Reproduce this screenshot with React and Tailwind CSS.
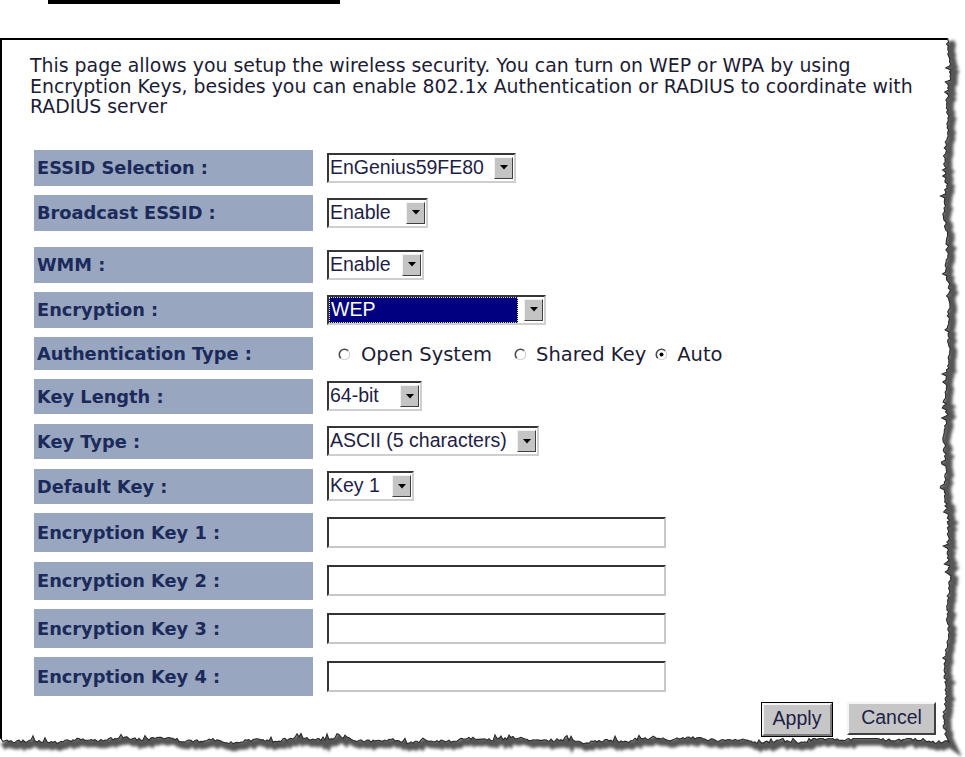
import React from 'react';

// seeded random so the torn edge looks the same every render
const makeRng = (seed) => () => {
  seed |= 0;
  seed = (seed + 0x6d2b79f5) | 0;
  let t = Math.imul(seed ^ (seed >>> 15), 1 | seed);
  t = (t + Math.imul(t ^ (t >>> 7), 61 | t)) ^ t;
  return ((t ^ (t >>> 14)) >>> 0) / 4294967296;
};

const edgePoints = () => {
  const r = makeRng(11);
  const pts = [];
  for (let y = 38; y <= 736; y += 2) {
    const x = 947 + 2 * Math.sin(y / 41) + 1.1 * Math.sin(y / 9) + (r() - 0.5) * 2.8 - (r() < 0.07 ? 3.5 : 0);
    pts.push([x, y]);
  }
  for (let x = 949; x >= 0; x -= 2) {
    let y = 740 + 1.6 * Math.sin(x / 29) + Math.sin(x / 7) + (r() - 0.5) * 2.8 - (r() < 0.07 ? 3.5 : 0);
    if (x > 752 && x < 945) y = Math.max(y, 738.5);
    pts.push([x, y]);
  }
  return pts;
};

const TornEdge = () => {
  const pts = edgePoints();
  const line = 'M' + pts.map(([x, y]) => `${x.toFixed(1)} ${y.toFixed(1)}`).join(' L');
  const last = pts[pts.length - 1];
  const outside = `${line} L0 ${last[1].toFixed(1)} L0 757 L965 757 L965 38 Z`;
  return (
    <svg className="pointer-events-none absolute left-0 top-0" width="965" height="757" viewBox="0 0 965 757">
      <defs>
        <clipPath id="outside">
          <path d={outside} />
        </clipPath>
        <filter id="blur" x="-5%" y="-5%" width="110%" height="110%">
          <feGaussianBlur stdDeviation="1.8" />
        </filter>
      </defs>
      <path d={outside} fill="#ffffff" />
      <g clipPath="url(#outside)">
        <path d={line} transform="translate(3 3)" fill="none" stroke="#555555" strokeWidth="8" filter="url(#blur)" />
      </g>
      <path d={line} fill="none" stroke="#2a2a2a" strokeWidth="1.1" />
    </svg>
  );
};

const Arrow = () => (
  <div className="flex h-[22px] w-[19px] items-center justify-center border border-t-[#f2f2f2] border-l-[#f2f2f2] border-r-[#404040] border-b-[#404040] bg-[#c4c4c4]">
    <svg width="8" height="5" viewBox="0 0 8 5">
      <path d="M0 0 L8 0 L4 4.5 Z" fill="#000" />
    </svg>
  </div>
);

const Select = ({ w, value, selected }) => (
  <div className={`flex h-[30px] items-center border-2 border-t-[#363636] border-l-[#363636] border-r-[#cfcfcf] border-b-[#cfcfcf] bg-white pr-[1px] ${w}`}>
    {selected ? (
      <div className="mr-[6px] flex h-full flex-1 items-center border border-dotted border-[#e8e0a0] bg-[#000080] pl-[1px] text-[19.5px] leading-none text-white">
        {value}
      </div>
    ) : (
      <div className="flex-1 pl-[1px] text-[19.5px] leading-none text-[#1e1e46]">{value}</div>
    )}
    <Arrow />
  </div>
);

const TextBox = () => (
  <div className="h-[31px] w-[339px] border-2 border-t-[#343434] border-l-[#343434] border-r-[#c8c8c8] border-b-[#c8c8c8] bg-white" />
);

const Radio = ({ checked }) => (
  <svg width="13" height="13" viewBox="0 0 13 13" className="shrink-0">
    <circle cx="6.5" cy="6.5" r="5.2" fill="#fff" />
    <path d="M10.2 2.8 A5.2 5.2 0 0 0 2.8 10.2" fill="none" stroke="#4a4a4a" strokeWidth="1.6" />
    <path d="M2.8 10.2 A5.2 5.2 0 0 0 10.2 2.8" fill="none" stroke="#d0d0d0" strokeWidth="1.1" />
    {checked && <circle cx="6.5" cy="6.5" r="2" fill="#000" />}
  </svg>
);

const Row = ({ label, className, children }) => (
  <div className={`flex items-center ${className}`}>
    <div className="flex h-full w-[279px] items-center bg-[#98a6bf] pl-[3px] pt-[2px] font-['DejaVu_Sans',Verdana,sans-serif] text-[17.8px] font-bold text-[#1b2a5a]">
      {label}
    </div>
    <div className="ml-[14px] flex items-center">{children}</div>
  </div>
);

export default function App() {
  return (
    <div className="relative h-[757px] w-[965px] overflow-hidden bg-white font-['DejaVu_Sans',Verdana,sans-serif]">
      <div className="ml-[48px] h-[4px] w-[292px] bg-black" />

      <div className="mt-[34px] h-[712px] w-[952px] border-l-2 border-t-2 border-black pl-[28px] pt-[15px]">
        <p className="text-[18.9px] leading-[20.5px] text-[#1c1c34]">
          This page allows you setup the wireless security. You can turn on WEP or WPA by using
          <br />
          Encryption Keys, besides you can enable 802.1x Authentication or RADIUS to coordinate with
          <br />
          RADIUS server
        </p>

        <div className="ml-[4px] mt-[33px] flex flex-col font-['Liberation_Sans',Arial,sans-serif]">
          <Row label="ESSID Selection :" className="h-[36px]">
            <Select w="w-[189px]" value="EnGenius59FE80" />
          </Row>
          <Row label="Broadcast ESSID :" className="mt-[9px] h-[36px]">
            <Select w="w-[101px]" value="Enable" />
          </Row>
          <Row label="WMM :" className="mt-[16px] h-[36px]">
            <Select w="w-[97px]" value="Enable" />
          </Row>
          <Row label="Encryption :" className="mt-[9px] h-[36px]">
            <Select w="w-[219px]" value="WEP" selected />
          </Row>
          <Row label="Authentication Type :" className="mt-[9px] h-[33px]">
            <div className="ml-[11px] mt-[3px] flex items-center font-['DejaVu_Sans',Verdana,sans-serif] text-[19.5px] text-[#1c1c34]">
              <Radio />
              <span className="ml-[10px]">Open System</span>
              <span className="ml-[22px]"><Radio /></span>
              <span className="ml-[9px]">Shared Key</span>
              <span className="ml-[9px]"><Radio checked /></span>
              <span className="ml-[9px]">Auto</span>
            </div>
          </Row>
          <Row label="Key Length :" className="mt-[9px] h-[35px]">
            <Select w="w-[95px]" value="64-bit" />
          </Row>
          <Row label="Key Type :" className="mt-[10px] h-[35px]">
            <Select w="w-[212px]" value="ASCII (5 characters)" />
          </Row>
          <Row label="Default Key :" className="mt-[10px] h-[35px]">
            <Select w="w-[87px]" value="Key 1" />
          </Row>
          <Row label="Encryption Key 1 :" className="mt-[9px] h-[39px]">
            <TextBox />
          </Row>
          <Row label="Encryption Key 2 :" className="mt-[10px] h-[38px]">
            <TextBox />
          </Row>
          <Row label="Encryption Key 3 :" className="mt-[9px] h-[39px]">
            <TextBox />
          </Row>
          <Row label="Encryption Key 4 :" className="mt-[9px] h-[39px]">
            <TextBox />
          </Row>

          <div className="mt-[6px] flex items-start pl-[727px]">
            <div className="h-[35px] w-[72px] border border-black">
              <div className="flex h-full items-center justify-center border-2 border-t-[#f4f4f4] border-l-[#f4f4f4] border-r-[#7a7a7a] border-b-[#7a7a7a] bg-[#c6c6c6] text-[19.5px] text-[#1e1e46]">
                Apply
              </div>
            </div>
            <div className="ml-[14px] flex h-[33px] w-[89px] items-center justify-center border-2 border-t-[#f4f4f4] border-l-[#f4f4f4] border-r-[#404040] border-b-[#404040] bg-[#c6c6c6] text-[19.5px] text-[#1e1e46]">
              Cancel
            </div>
          </div>
        </div>
      </div>

      <TornEdge />
    </div>
  );
}
